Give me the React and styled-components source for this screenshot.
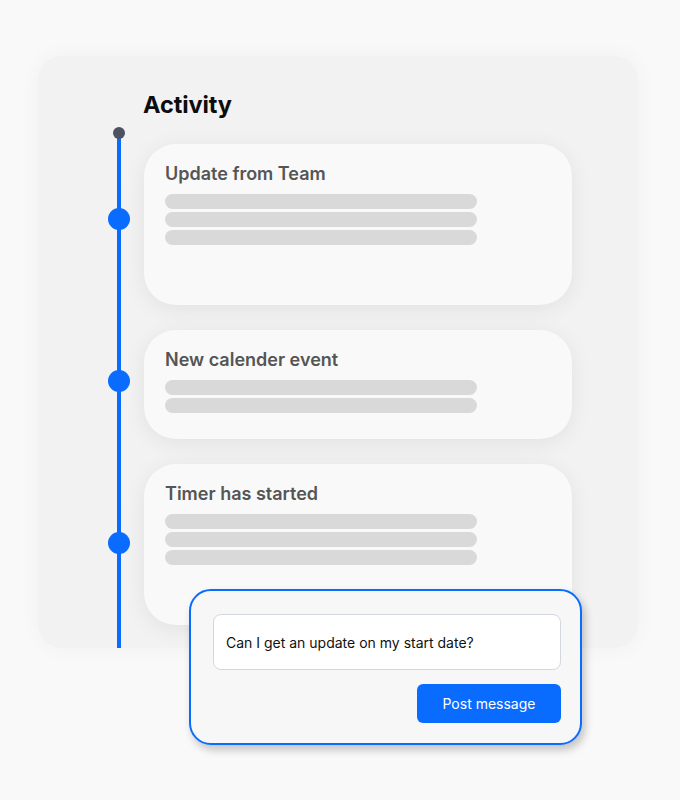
import React from "react";
import styled, { createGlobalStyle } from "styled-components";

const Global = createGlobalStyle`
  html, body { margin: 0; padding: 0; background: #f9f9f9; }
  body { font-family: Inter, "Noto Sans", sans-serif; }
  * { box-sizing: border-box; }
`;

const Page = styled.div`
  width: 680px;
  height: 800px;
  padding: 56px 42px 0 38px;
  position: relative;
`;

const Panel = styled.div`
  width: 600px;
  height: 592px;
  background: #f2f2f2;
  border-radius: 24px;
  box-shadow: 0 0 24px rgba(0, 0, 0, 0.04);
  padding: 31px 0 0 70px;
  overflow: hidden;
  position: relative;
`;

const Title = styled.h1`
  margin: 0 0 0 35px;
  font-size: 23.5px;
  line-height: 36px;
  font-weight: 700;
  color: #0d0d0d;
  letter-spacing: -0.1px;
`;

const Timeline = styled.div`
  position: relative;
  margin-top: 10px;
  padding-top: 11px;
  display: flex;
  flex-direction: column;
  gap: 25px;
`;

const Line = styled.div`
  position: absolute;
  left: 9px;
  top: 0;
  bottom: -40px;
  width: 4px;
  background: #0a6cff;
`;

const TopDot = styled.div`
  position: absolute;
  left: 5px;
  top: -6px;
  width: 12px;
  height: 12px;
  border-radius: 50%;
  background: #4b5261;
`;

const Row = styled.div`
  display: flex;
  align-items: center;
  gap: 14px;
  position: relative;
`;

const Dot = styled.div`
  width: 22px;
  height: 22px;
  border-radius: 50%;
  background: #0a6cff;
  flex: none;
  position: relative;
  margin-top: ${(p) => p.$shift}px;
`;

const Card = styled.div`
  width: 428px;
  height: ${(p) => p.$h}px;
  background: #f9f9f9;
  border-radius: 32px;
  box-shadow: 0 4px 22px rgba(0, 0, 0, 0.07);
  padding: 19px 21px;
  display: flex;
  flex-direction: column;
`;

const CardTitle = styled.div`
  font-size: 18px;
  font-weight: 600;
  color: #555555;
  line-height: 22px;
  margin-bottom: 9px;
`;

const Bars = styled.div`
  display: flex;
  flex-direction: column;
  gap: 3px;
`;

const Bar = styled.div`
  width: 312px;
  height: 15px;
  border-radius: 8px;
  background: #d9d9d9;
`;

const MessageBox = styled.div`
  position: absolute;
  left: 189px;
  top: 589px;
  width: 393px;
  height: 156px;
  background: #f7f7f7;
  border: 2px solid #0a6cff;
  border-radius: 22px;
  box-shadow: 3px 5px 8px rgba(0, 0, 0, 0.22);
  padding: 23px 19px 0 22px;
  display: flex;
  flex-direction: column;
  align-items: flex-end;
  gap: 14px;
`;

const Input = styled.div`
  width: 100%;
  height: 56px;
  background: #ffffff;
  border: 1px solid #d3d7df;
  border-radius: 8px;
  padding: 0 12px;
  display: flex;
  align-items: center;
  font-size: 14px;
  color: #111111;
`;

const Button = styled.button`
  width: 144px;
  height: 39px;
  border: none;
  border-radius: 6px;
  background: #0a6cff;
  color: #ffffff;
  font-family: Inter, "Noto Sans", sans-serif;
  font-size: 14px;
  font-weight: 400;
  cursor: pointer;
`;

const items = [
  { title: "Update from Team", h: 161, bars: 3, shift: -11 },
  { title: "New calender event", h: 109, bars: 2, shift: -7 },
  { title: "Timer has started", h: 161, bars: 3, shift: -3 },
];

export default function App() {
  return (
    <>
      <Global />
      <Page>
        <Panel>
          <Title>Activity</Title>
          <Timeline>
            <Line />
            <TopDot />
            {items.map((it) => (
              <Row key={it.title}>
                <Dot $shift={it.shift} />
                <Card $h={it.h}>
                  <CardTitle>{it.title}</CardTitle>
                  <Bars>
                    {Array.from({ length: it.bars }).map((_, i) => (
                      <Bar key={i} />
                    ))}
                  </Bars>
                </Card>
              </Row>
            ))}
          </Timeline>
        </Panel>
        <MessageBox>
          <Input>Can I get an update on my start date?</Input>
          <Button>Post message</Button>
        </MessageBox>
      </Page>
    </>
  );
}
